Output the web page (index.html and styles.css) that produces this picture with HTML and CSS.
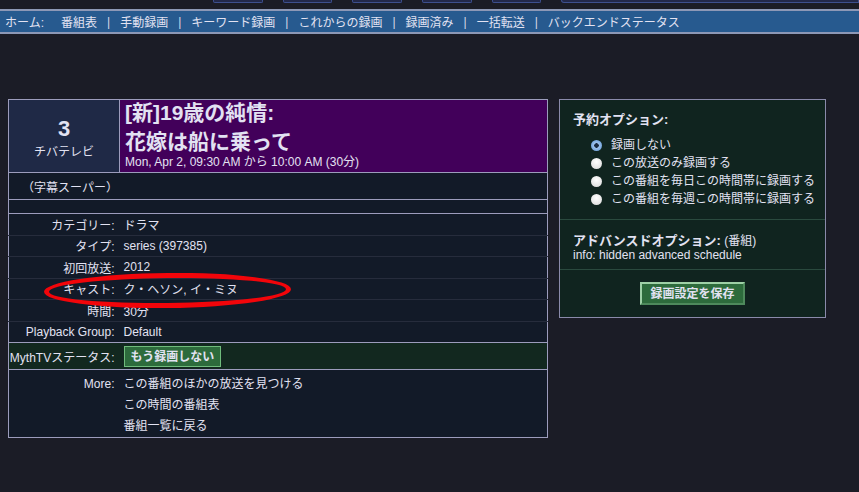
FILE: index.html
```html
<!DOCTYPE html>
<html lang="ja">
<head>
  <meta charset="UTF-8">
  <title>番組詳細</title>
  <link rel="stylesheet" href="styles.css">
</head>
<body>
  <div class="tabs">
    <span class="tab"></span>
    <span class="tab"></span>
    <span class="tab"></span>
    <span class="tab"></span>
    <span class="tab"></span>
    <span class="tab wide"></span>
  </div>

  <div class="menu">
    <span class="home">ホーム:</span>
    <a>番組表</a><span class="sep">|</span>
    <a>手動録画</a><span class="sep">|</span>
    <a>キーワード録画</a><span class="sep">|</span>
    <a>これからの録画</a><span class="sep">|</span>
    <a>録画済み</a><span class="sep">|</span>
    <a>一括転送</a><span class="sep">|</span>
    <a>バックエンドステータス</a>
  </div>

  <div class="content">
    <div class="program-wrap">
      <table class="program">
        <tr class="head">
          <td class="channel">
            <div class="chan-num">3</div>
            <div class="chan-name">チバテレビ</div>
          </td>
          <td class="title">
            <div class="title-text">[新]19歳の純情:<br>花嫁は船に乗って</div>
            <div class="airtime">Mon, Apr 2, 09:30 AM から 10:00 AM (30分)</div>
          </td>
        </tr>
        <tr class="subtitle">
          <td colspan="2">（字幕スーパー）</td>
        </tr>
        <tr class="blank">
          <td colspan="2"></td>
        </tr>
        <tr class="detail">
          <th>カテゴリー:</th>
          <td>ドラマ</td>
        </tr>
        <tr class="detail">
          <th>タイプ:</th>
          <td>series (397385)</td>
        </tr>
        <tr class="detail">
          <th>初回放送:</th>
          <td>2012</td>
        </tr>
        <tr class="detail">
          <th>キャスト:</th>
          <td>ク・ヘソン, イ・ミヌ</td>
        </tr>
        <tr class="detail">
          <th>時間:</th>
          <td>30分</td>
        </tr>
        <tr class="detail last">
          <th>Playback Group:</th>
          <td>Default</td>
        </tr>
        <tr class="status">
          <th>MythTVステータス:</th>
          <td><span class="btn">もう録画しない</span></td>
        </tr>
        <tr class="more">
          <th>More:</th>
          <td>
            <div>この番組のほかの放送を見つける</div>
            <div>この時間の番組表</div>
            <div>番組一覧に戻る</div>
          </td>
        </tr>
      </table>
      <div class="circle"></div>
    </div>

    <div class="options">
      <div class="opt-block">
        <div class="opt-head">予約オプション:</div>
        <ul class="radios">
          <li><span class="radio checked"></span>録画しない</li>
          <li><span class="radio"></span>この放送のみ録画する</li>
          <li><span class="radio"></span>この番組を毎日この時間帯に録画する</li>
          <li><span class="radio"></span>この番組を毎週この時間帯に録画する</li>
        </ul>
      </div>
      <div class="opt-block adv">
        <div class="opt-head">アドバンスドオプション: <span class="normal">(番組)</span></div>
        <div class="info">info: hidden advanced schedule</div>
      </div>
      <div class="opt-save">
        <span class="btn save">録画設定を保存</span>
      </div>
    </div>
  </div>
</body>
</html>
```

FILE: styles.css
```css
* {
  margin: 0;
  padding: 0;
  box-sizing: border-box;
}

body {
  background: #1b1c26;
  color: #e2e2f2;
  font-family: "Liberation Sans", "Noto Sans CJK JP", sans-serif;
  font-size: 12px;
  width: 859px;
  height: 492px;
  overflow: hidden;
}

.tabs {
  height: 9px;
  display: flex;
  padding-left: 213px;
  gap: 20px;
}

.tab {
  width: 50px;
  height: 3px;
  background: #22284a;
  border: 1px solid #3d4f8e;
  border-top: none;
  border-radius: 0 0 2px 2px;
}

.tab.wide {
  width: 300px;
  border-radius: 0 0 0 3px;
}

.menu {
  background: #275a8f;
  border-top: 2px solid #8d98b6;
  border-bottom: 2px solid #8d98b6;
  height: 25px;
  display: flex;
  align-items: center;
  padding-left: 5px;
  white-space: nowrap;
}

.menu .home {
  margin-right: 17px;
}

.menu a {
  color: #e2e2f2;
}

.menu .sep {
  margin: 0 10px;
  color: #d8d8e6;
}

.content {
  display: flex;
  align-items: flex-start;
  padding: 65px 0 0 8px;
  gap: 11px;
}

.program-wrap {
  position: relative;
}

.program {
  width: 540px;
  border-collapse: collapse;
  border: 1px solid #9c9cbc;
  background: #121a28;
}

.program td,
.program th {
  padding: 0;
  vertical-align: middle;
}

.program th {
  width: 110px;
  text-align: right;
  font-weight: normal;
  padding-right: 5px;
  white-space: nowrap;
}

.program td {
  padding-left: 4px;
}

.head {
  height: 73px;
}

.head td {
  border-bottom: 1px solid #9c9cbc;
  vertical-align: top;
}

.channel {
  width: 111px;
  background: #1f2946;
  text-align: center;
  border-right: 1px solid #9c9cbc;
}

.program td.channel {
  padding: 16px 0 0;
  vertical-align: top;
}

.chan-num {
  font-size: 22px;
  font-weight: bold;
  line-height: 26px;
}

.chan-name {
  font-size: 12px;
  line-height: 17px;
  margin-top: 2px;
}

.title {
  background: #42005a;
}

.program td.title {
  padding: 0 0 2px 5px;
  vertical-align: top;
}

.title-text {
  font-size: 21px;
  font-weight: bold;
  line-height: 29px;
  margin-top: -2px;
}

.airtime {
  font-size: 12px;
  line-height: 16px;
  margin-top: -2px;
}

.subtitle {
  height: 27px;
}

.program .subtitle td {
  padding-left: 13px;
  border-bottom: 1px solid #9c9cbc;
}

.blank {
  height: 14px;
}

.blank td {
  border-bottom: 1px solid #9c9cbc;
}

.detail {
  height: 21.5px;
}

.detail th,
.detail td {
  border-bottom: 1px solid #262c3c;
}

.detail.last th,
.detail.last td {
  border-bottom: 1px solid #9c9cbc;
}

.status {
  height: 27px;
  background: #12281f;
}

.status th,
.status td {
  border-bottom: 1px solid #9c9cbc;
}

.btn {
  display: inline-block;
  background: #2d6b3c;
  border: 1px solid #6fbc7c;
  font-weight: bold;
  padding: 2px 6px 1px;
  line-height: 16px;
}

.more th,
.more td {
  vertical-align: top;
  padding-top: 4px;
  height: 66px;
}

.more td div {
  line-height: 21px;
}

.more th {
  line-height: 21px;
}

.circle {
  position: absolute;
  left: 36px;
  top: 174px;
  width: 247px;
  height: 35px;
  border: 5px solid #f2050a;
  border-radius: 50%;
  transform: rotate(-0.6deg);
  pointer-events: none;
}

.options {
  width: 267px;
  background: #10241f;
  border: 1px solid #8a8aaa;
}

.opt-block {
  padding: 12px 13px 11px;
  border-bottom: 1px solid #2a4a3e;
}

.opt-head {
  font-size: 13px;
  font-weight: bold;
  line-height: 16px;
}

.opt-head .normal {
  font-weight: normal;
  font-size: 12px;
}

.radios {
  list-style: none;
  padding: 8px 0 0 18px;
}

.radios li {
  display: flex;
  align-items: center;
  line-height: 18px;
  white-space: nowrap;
}

.radio {
  width: 11px;
  height: 11px;
  border-radius: 50%;
  background: radial-gradient(circle at 50% 35%, #ffffff, #d8d8d8);
  margin-right: 9px;
  flex: none;
}

.radio.checked {
  background: radial-gradient(circle, #1a2a40 0 2px, #9ec2ec 2.5px, #5a92d4);
}

.adv {
  padding: 13px 13px 6px;
}

.info {
  font-size: 12px;
  line-height: 15px;
  margin-top: -1px;
}

.opt-save {
  text-align: center;
  padding: 12px 0;
}

.btn.save {
  border: 2px solid #9ed0a6;
  border-right-color: #4e8a5c;
  border-bottom-color: #4e8a5c;
  padding: 2px 8px 1px;
}
```
